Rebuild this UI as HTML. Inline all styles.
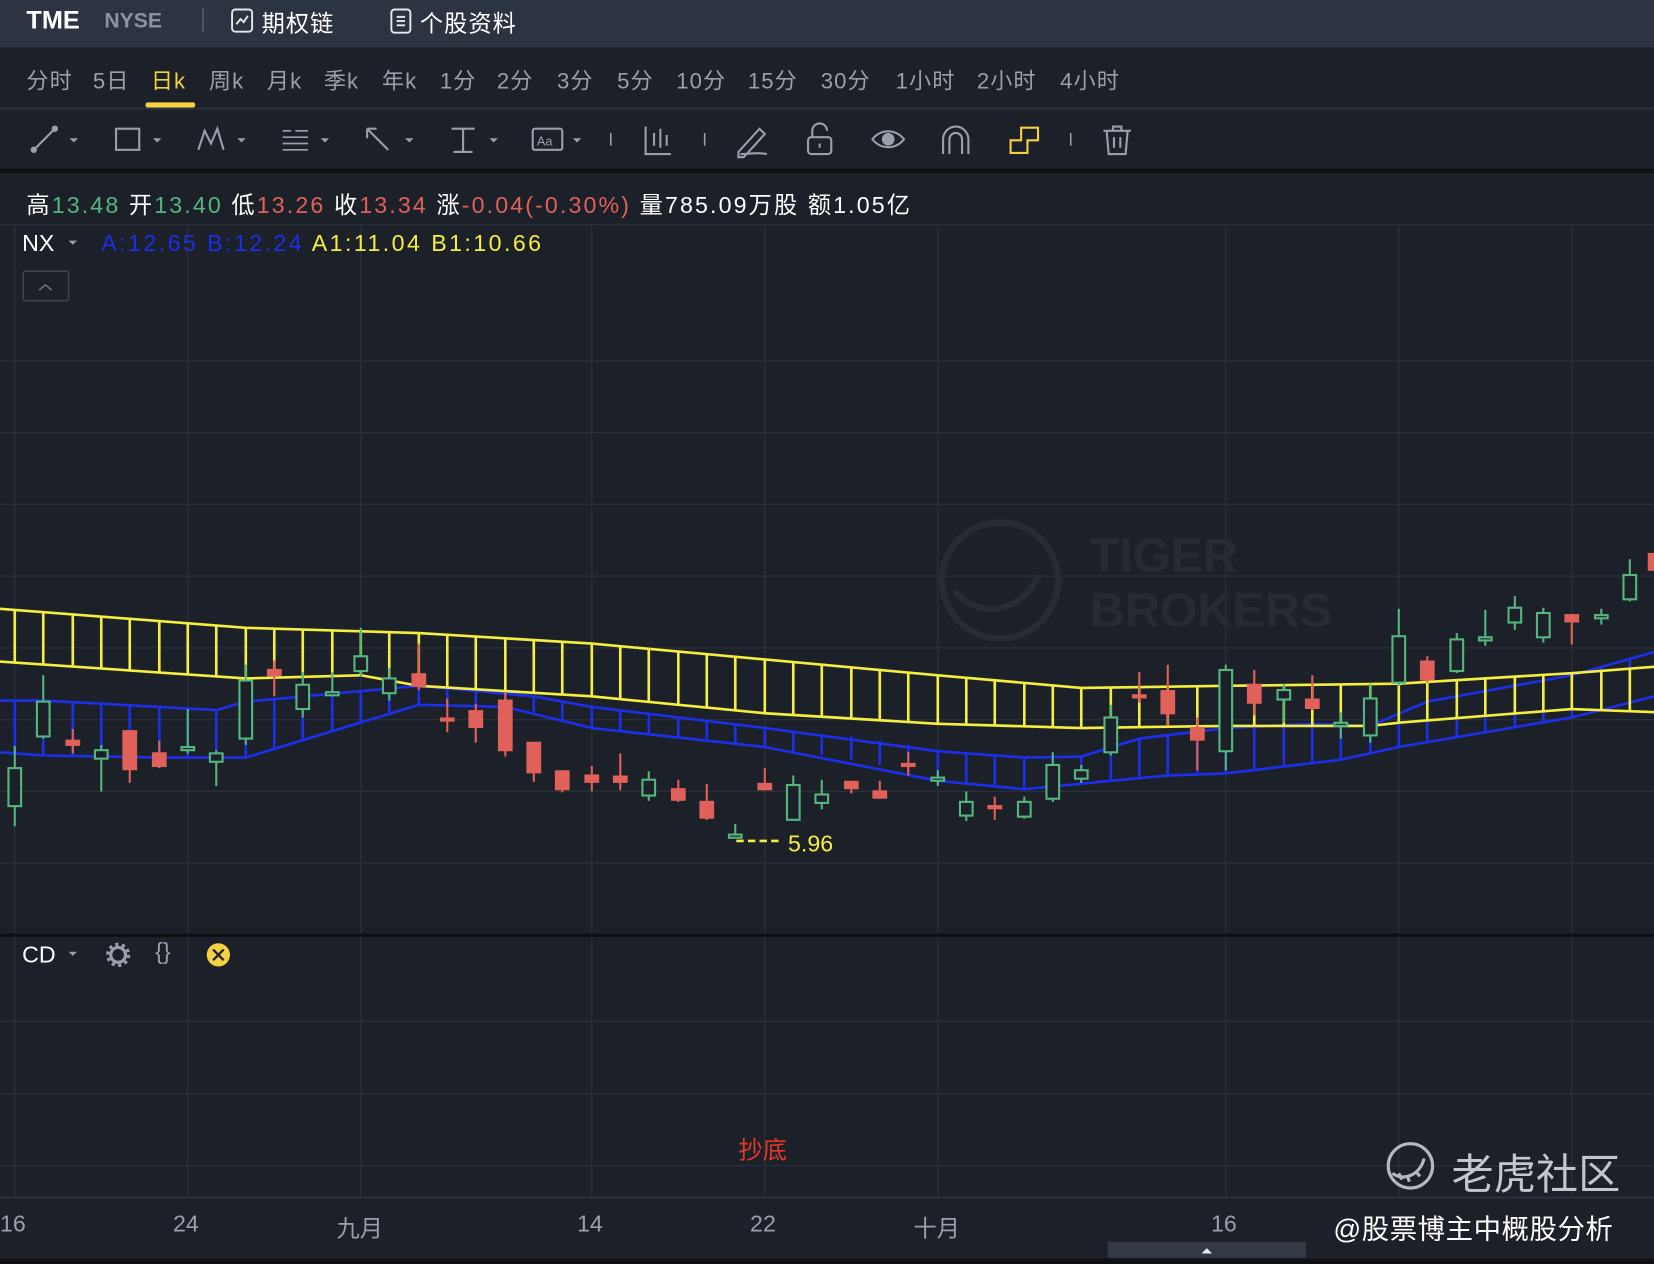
<!DOCTYPE html>
<html><head><meta charset="utf-8"><style>
html,body{margin:0;padding:0;background:#1c2029;overflow:hidden}
#w{position:absolute;left:0;top:0;width:1568px;height:1198px;transform:scale(1.0549,1.0551);transform-origin:0 0;background:#1c2029;font-family:"Liberation Sans","Noto Sans CJK SC",sans-serif;color:#e6e8ec}
.t{position:absolute;white-space:nowrap}
.tab{position:absolute;top:61px;font-size:21px;color:#9aa0ab;white-space:nowrap;letter-spacing:1px}
</style></head><body><div id="w">
<div style="position:absolute;left:0;top:0;width:1568px;height:45px;background:#2d3441"></div>
<div class="t" style="left:25px;top:6px;font-size:24px;font-weight:bold;color:#fff">TME</div>
<div class="t" style="left:99px;top:9px;font-size:20px;font-weight:bold;color:#8c93a0">NYSE</div>
<div style="position:absolute;left:192px;top:8px;width:1px;height:22px;background:#6a717d"></div>
<svg style="position:absolute;left:217px;top:7px" width="26" height="26" viewBox="0 0 26 26" fill="none" stroke="#e6e8ec" stroke-width="1.8"><rect x="3" y="2" width="19" height="21" rx="3"/><path d="M7 16l4-5 3 3 4-6"/></svg>
<div class="t" style="left:248px;top:5px;font-size:22px;color:#fff;letter-spacing:1px">期权链</div>
<svg style="position:absolute;left:368px;top:7px" width="24" height="26" viewBox="0 0 24 26" fill="none" stroke="#e6e8ec" stroke-width="1.8"><rect x="3" y="2" width="18" height="22" rx="3"/><path d="M8 9h8M8 13h8M8 17h8"/></svg>
<div class="t" style="left:398px;top:5px;font-size:22px;color:#fff;letter-spacing:1px">个股资料</div>

<div class="tab" style="left:25px">分时</div><div class="tab" style="left:88px">5日</div><div class="tab" style="left:143px;color:#f5d142">日k</div><div class="tab" style="left:198px">周k</div><div class="tab" style="left:253px">月k</div><div class="tab" style="left:307px">季k</div><div class="tab" style="left:362px">年k</div><div class="tab" style="left:417px">1分</div><div class="tab" style="left:471px">2分</div><div class="tab" style="left:528px">3分</div><div class="tab" style="left:585px">5分</div><div class="tab" style="left:641px">10分</div><div class="tab" style="left:709px">15分</div><div class="tab" style="left:778px">30分</div><div class="tab" style="left:849px">1小时</div><div class="tab" style="left:926px">2小时</div><div class="tab" style="left:1005px">4小时</div>
<div style="position:absolute;left:138px;top:97px;width:47px;height:5px;border-radius:2px;background:#f5d142"></div>
<div style="position:absolute;left:0;top:102px;width:1568px;height:2px;background:#2b303a"></div>

<svg style="position:absolute;left:0;top:110px" width="1100" height="45" fill="none" stroke="#9aa0ab" stroke-width="2">
<path d="M32 32L52 12"/><circle cx="32" cy="32" r="2" fill="#9aa0ab"/><circle cx="52" cy="12" r="2" fill="#9aa0ab"/><path d="M66 21l4 4 4-4z" fill="#9aa0ab" stroke="none"/>
<rect x="110" y="12" width="22" height="20"/><path d="M145 21l4 4 4-4z" fill="#9aa0ab" stroke="none"/>
<path d="M188 32l6-18 6 12 6-14 6 20"/><path d="M225 21l4 4 4-4z" fill="#9aa0ab" stroke="none"/>
<path d="M268 14h8M280 14h12M268 20h24M268 26h24M268 32h24" stroke-width="1.6"/><path d="M304 21l4 4 4-4z" fill="#9aa0ab" stroke="none"/>
<path d="M348 12l20 20M348 12v9M348 12h9"/><path d="M384 21l4 4 4-4z" fill="#9aa0ab" stroke="none"/>
<path d="M428 12h22M439 12v22M430 34h18"/><path d="M464 21l4 4 4-4z" fill="#9aa0ab" stroke="none"/>
<rect x="505" y="12" width="28" height="20" rx="2"/><text x="509" y="28" font-size="12" fill="#9aa0ab" stroke="none" font-family="Liberation Sans">Aa</text><path d="M543 21l4 4 4-4z" fill="#9aa0ab" stroke="none"/>
<path d="M579 16v12M668 16v12M1015 16v12" stroke-width="1.5"/>
<path d="M612 10v26h24M620 16v12M626 12v18M632 18v10"/>
<path d="M700 34l20-22 5 5-20 22h-5z M702 36c10 0 15-2 25 0"/>
<rect x="766" y="20" width="22" height="16" rx="3"/><path d="M770 20v-6a7 7 0 0 1 14 0M777 26v4"/>
<path d="M827 22c8-10 22-10 30 0c-8 10-22 10-30 0z"/><circle cx="842" cy="22" r="5" fill="#9aa0ab"/>
<path d="M894 36v-14a12 12 0 0 1 24 0v14M900 36v-14a6 6 0 0 1 12 0v14"/>
<path d="M968 11h16v12h-10v12h-16v-12h10z" stroke="#f5d142"/>
<path d="M1046 14h26M1055 14v-4h8v4M1049 14l2 22h16l2-22M1056 20v10M1062 20v10"/>
</svg>
<div style="position:absolute;left:0;top:160px;width:1568px;height:4px;background:#0e1014"></div>

<div class="t" style="left:25px;top:177px;font-size:22px;color:#fff;letter-spacing:2px">高<span style="color:#56b47f">13.48</span> 开<span style="color:#56b47f">13.40</span> 低<span style="color:#e0605a">13.26</span> 收<span style="color:#e0605a">13.34</span> 涨<span style="color:#e0605a">-0.04(-0.30%)</span> 量785.09万股 额1.05亿</div>

<svg style="position:absolute;left:0;top:0" width="1568" height="1198">
<g stroke="#2a303a" stroke-width="1.2">
<path d="M0 213H1568M0 342H1568M0 410H1568M0 478H1568M0 546H1568M0 614H1568M0 682H1568M0 750H1568M0 818H1568M0 968H1568M0 1037H1568M0 1105H1568"/>
<path d="M14 213V1135M178 213V1135M342 213V1135M561 213V1135M725 213V1135M889 213V1135M1162 213V1135M1326 213V1135M1490 213V1135"/>
</g>
<rect x="0" y="885" width="1568" height="3" fill="#0e1014"/>
<rect x="0" y="1134" width="1568" height="2" fill="#2a303a"/>
<g fill="none" stroke="#262c35" stroke-width="6"><circle cx="948" cy="550" r="55"/><path d="M905 560c20 25 60 25 80-15"/></g>
<text x="1033" y="542" font-size="46" font-weight="bold" fill="#252a33" font-family="Liberation Sans">TIGER</text>
<text x="1033" y="594" font-size="46" font-weight="bold" fill="#252a33" font-family="Liberation Sans">BROKERS</text>
<g stroke="#1d2ee8" stroke-width="2.5" fill="none">
<path d="M0 664L41 664L151 670L205 673L233 665L397 650L506 660L561 670L725 690L889 712L971 718L1025 717L1080 700L1162 690L1244 686L1299 688L1353 665L1490 640L1568 618"/>
<path d="M0 713L41 716L151 718L233 718L397 668L479 670L561 690L725 708L889 740L971 748L1053 740L1107 735L1162 733L1271 720L1326 708L1490 680L1568 660"/>
<path d="M14 664V713M41 664V716M69 666V716M96 667V717M123 668V717M151 670V718M178 671V718M205 673V718M233 665V718M260 663V710M287 660V702M315 658V694M342 656V686M369 653V677M397 650V668M424 652V669M451 655V670M479 657V670M506 660V675M533 665V682M561 670V690M588 673V692M615 677V695M643 680V698M670 684V702M697 687V705M725 690V708M752 693V712M779 696V716M807 698V720M834 702V725M861 706V732M889 712V740M916 714V743M943 716V746M971 718V748M998 718V745M1025 717V742M1053 708V740M1080 700V737M1107 697V735M1135 693V734M1162 690V733M1189 688V730M1217 687V726M1244 686V723M1271 687V720M1299 688V714M1326 674V708M1353 665V704M1381 660V699M1408 656V694M1436 651V689M1463 645V684M1490 640V680M1518 632V672M1545 625V666"/>
</g>
<g stroke="#f4ee3e" stroke-width="2.5" fill="none">
<path d="M0 577L233 595L397 600L561 610L725 625L889 640L1025 652L1162 650L1326 648L1490 638L1568 632"/>
<path d="M0 627L233 643L342 640L397 650L561 660L725 676L889 686L1025 690L1162 688L1299 688L1326 685L1490 672L1568 675"/>
<path d="M14 578V628M41 580V630M69 582V632M96 584V634M123 586V636M151 589V638M178 591V640M205 593V641M233 595V643M260 596V642M287 597V641M315 597V641M342 598V640M369 599V645M397 600V650M424 602V652M451 603V653M479 605V655M506 607V657M533 608V658M561 610V660M588 612V663M615 615V666M643 617V668M670 620V671M697 622V673M725 625V676M752 627V678M779 630V679M807 632V681M834 635V683M861 637V684M889 640V686M916 642V687M943 645V688M971 647V689M998 650V690M1025 652V690M1053 652V690M1080 651V690M1107 651V689M1135 650V689M1162 650V688M1189 650V688M1217 649V688M1244 649V688M1271 649V688M1299 648V688M1326 648V685M1353 646V683M1381 645V681M1408 643V678M1436 642V676M1463 640V674M1490 638V672M1518 635V673M1545 633V674"/>
</g>
<g stroke="#56b47f" stroke-width="2" fill="#1c2029">
<path d="M14 707V783M41 640V700M96 706V750M178 672V714M205 711V745M233 630V706M287 637V680M315 637V659M342 595V641M369 633V664M615 731V759M697 781V794M752 735V778M779 739V767M889 730V745M916 750V778M971 755V776M998 713V760M1025 725V742M1053 668V716M1162 630V730M1217 648V685M1271 675V700M1299 648V704M1326 577V650M1381 600V638M1408 578V612M1436 565V597M1463 576V609M1518 577V592M1545 530V570"/>
<rect x="8" y="728" width="12" height="36"/><rect x="35" y="665" width="12" height="33"/><rect x="90" y="711" width="12" height="8"/><rect x="172" y="708" width="12" height="3"/><rect x="199" y="714" width="12" height="8"/><rect x="227" y="645" width="12" height="55"/><rect x="281" y="649" width="12" height="23"/><rect x="309" y="656" width="12" height="3"/><rect x="336" y="622" width="12" height="14"/><rect x="363" y="643" width="12" height="14"/><rect x="609" y="739" width="12" height="15"/><rect x="691" y="791" width="12" height="3"/><rect x="746" y="744" width="12" height="33"/><rect x="773" y="753" width="12" height="8"/><rect x="883" y="737" width="12" height="3"/><rect x="910" y="760" width="12" height="13"/><rect x="965" y="760" width="12" height="14"/><rect x="992" y="725" width="12" height="32"/><rect x="1019" y="730" width="12" height="8"/><rect x="1047" y="680" width="12" height="33"/><rect x="1156" y="635" width="12" height="77"/><rect x="1211" y="654" width="12" height="9"/><rect x="1265" y="685" width="12" height="3"/><rect x="1293" y="662" width="12" height="35"/><rect x="1320" y="603" width="12" height="44"/><rect x="1375" y="606" width="12" height="30"/><rect x="1402" y="604" width="12" height="3"/><rect x="1430" y="576" width="12" height="14"/><rect x="1457" y="581" width="12" height="23"/><rect x="1512" y="583" width="12" height="3"/><rect x="1539" y="545" width="12" height="23"/>
</g>
<g stroke="#e0605a" stroke-width="2" fill="#e0605a">
<path d="M69 691V714M123 693V742M151 702V728M260 626V660M397 610V654M424 662V694M451 667V704M479 656V717M506 704V741M533 731V751M561 726V750M588 714V749M643 739V760M670 743V777M725 728V749M807 740V752M834 740V757M861 713V735M943 755V777M1080 637V666M1107 630V688M1135 680V730M1189 635V678M1244 640V673M1353 622V647M1490 583V611"/>
<rect x="63" y="702" width="12" height="4"/><rect x="117" y="693" width="12" height="36"/><rect x="145" y="714" width="12" height="12"/><rect x="254" y="635" width="12" height="5"/><rect x="391" y="639" width="12" height="11"/><rect x="418" y="681" width="12" height="2"/><rect x="445" y="674" width="12" height="15"/><rect x="473" y="664" width="12" height="47"/><rect x="500" y="704" width="12" height="28"/><rect x="527" y="731" width="12" height="17"/><rect x="555" y="735" width="12" height="6"/><rect x="582" y="736" width="12" height="5"/><rect x="637" y="748" width="12" height="10"/><rect x="664" y="760" width="12" height="15"/><rect x="719" y="743" width="12" height="5"/><rect x="801" y="741" width="12" height="6"/><rect x="828" y="750" width="12" height="6"/><rect x="855" y="724" width="12" height="2"/><rect x="937" y="764" width="12" height="2"/><rect x="1074" y="659" width="12" height="2"/><rect x="1101" y="655" width="12" height="21"/><rect x="1129" y="690" width="12" height="11"/><rect x="1183" y="649" width="12" height="17"/><rect x="1238" y="663" width="12" height="8"/><rect x="1347" y="627" width="12" height="17"/><rect x="1484" y="583" width="12" height="6"/><rect x="1563" y="525" width="8" height="15"/>
</g>
<path d="M698 797H742" stroke="#f4ee3e" stroke-width="2.5" stroke-dasharray="7 4"/>
<text x="747" y="807" font-size="22" fill="#f4ee3e" font-family="Liberation Sans">5.96</text>
<rect x="22" y="257" width="43" height="28" rx="2" fill="none" stroke="#3d434e" stroke-width="1.5"/>
<path d="M37 275l6-5 6 5" fill="none" stroke="#6a717d" stroke-width="1.5"/>
<path d="M65 902l4 4 4-4z" fill="#9aa0ab"/><path d="M65 228l4 4 4-4z" fill="#9aa0ab"/>
<g fill="none" stroke="#9aa0ab" stroke-width="3"><circle cx="112" cy="905" r="7"/></g>
<g stroke="#9aa0ab" stroke-width="3" stroke-dasharray="3 3.3"><circle cx="112" cy="905" r="10" fill="none"/></g>
<circle cx="207" cy="905" r="11" fill="#f5d142"/><path d="M202 900l10 10M212 900l-10 10" stroke="#1c2029" stroke-width="2.2"/>
<rect x="1050" y="1177" width="188" height="15" fill="#333945"/>
<path d="M1139 1188l5-5 5 5z" fill="#e6e8ec"/>
<rect x="0" y="1193" width="1568" height="5" fill="#0e1014"/>
<g fill="none" stroke="#b5b8be" stroke-width="3"><circle cx="1337" cy="1105" r="21"/><path d="M1320 1112c10 8 26 2 30-14M1326 1112l3 6M1334 1114l2 6M1342 1110l4 5"/></g>
</svg>

<div class="t" style="left:21px;top:218px;font-size:22px;color:#fff">NX</div>
<div class="t" style="left:96px;top:218px;font-size:22px;color:#1d2ee8;letter-spacing:2.3px">A:12.65 B:12.24 <span style="color:#f4ee3e">A1:11.04 B1:10.66</span></div>
<div class="t" style="left:21px;top:892px;font-size:22px;color:#fff">CD</div>
<div class="t" style="left:147px;top:889px;font-size:22px;color:#9aa0ab">{}</div>
<div class="t" style="left:700px;top:1071px;font-size:23px;color:#e8372a">抄底</div>
<div class="t" style="left:1376px;top:1081px;font-size:40px;color:#c4c6cb">老虎社区</div>
<div class="t" style="left:1264px;top:1145px;font-size:26px;color:#fff;letter-spacing:0.5px">@股票博主中概股分析</div>
<div class="t" style="top:1147px;font-size:22px;color:#9aa0ab;left:0;width:1568px">
<span style="position:absolute;left:0px">16</span><span style="position:absolute;left:164px">24</span><span style="position:absolute;left:319px">九月</span><span style="position:absolute;left:547px">14</span><span style="position:absolute;left:711px">22</span><span style="position:absolute;left:866px">十月</span><span style="position:absolute;left:1148px">16</span></div>
</div></body></html>
